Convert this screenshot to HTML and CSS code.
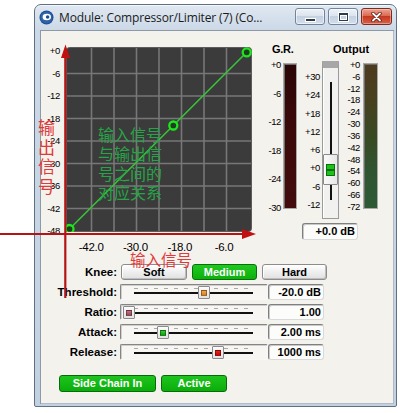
FILE: index.html
```html
<!DOCTYPE html>
<html>
<head>
<meta charset="utf-8">
<link rel="stylesheet" href="styles.css">
</head>
<body>
<div class="window">
  <div class="titlebar">
    <svg class="app-icon" width="15" height="15" viewBox="0 0 15 15">
      <circle cx="7.5" cy="7.5" r="7" fill="#1d4d8e"/>
      <circle cx="7.5" cy="7.5" r="6" fill="#2c63aa"/>
      <ellipse cx="7.8" cy="7" rx="4.2" ry="3.2" fill="#fff"/>
      <circle cx="8.6" cy="7" r="1.8" fill="#1d4d8e"/>
    </svg>
    <span class="title">Module: Compressor/Limiter (7) (Co...</span>
    <div class="caption">
      <div class="cbtn min"><span class="g-min"></span></div>
      <div class="cbtn max"><span class="g-max"></span></div>
      <div class="cbtn close">
        <svg width="11" height="10" viewBox="0 0 11 10">
          <path d="M2 1.5 L9 8.5 M9 1.5 L2 8.5" stroke="#5a1a10" stroke-width="3.4" stroke-linecap="round"/>
          <path d="M2 1.5 L9 8.5 M9 1.5 L2 8.5" stroke="#fff" stroke-width="1.8" stroke-linecap="round"/>
        </svg>
      </div>
    </div>
  </div>
  <div class="client">
    <div class="top">
      <div class="curve">
        <div class="ylabels">
          <span>+0</span><span>-6</span><span>-12</span><span>-18</span><span>-24</span><span>-30</span><span>-36</span><span>-42</span><span>-48</span>
        </div>
        <div class="graph-col">
          <svg class="graph" width="186" height="185" viewBox="0 0 186 185">
            <rect x="0.5" y="0.5" width="185" height="184" rx="3" fill="#3b3b3b" stroke="#5c5c5c"/>
            <g stroke="#777" stroke-width="1.6">
              <line x1="25.5" y1="1" x2="25.5" y2="184"/>
              <line x1="48" y1="1" x2="48" y2="184"/>
              <line x1="70.5" y1="1" x2="70.5" y2="184"/>
              <line x1="93" y1="1" x2="93" y2="184"/>
              <line x1="115.5" y1="1" x2="115.5" y2="184"/>
              <line x1="138" y1="1" x2="138" y2="184"/>
              <line x1="160.5" y1="1" x2="160.5" y2="184"/>
              <line x1="1" y1="26.5" x2="185" y2="26.5"/>
              <line x1="1" y1="49" x2="185" y2="49"/>
              <line x1="1" y1="71.5" x2="185" y2="71.5"/>
              <line x1="1" y1="94" x2="185" y2="94"/>
              <line x1="1" y1="116.5" x2="185" y2="116.5"/>
              <line x1="1" y1="139" x2="185" y2="139"/>
              <line x1="1" y1="161.5" x2="185" y2="161.5"/>
            </g>
            <line x1="3.5" y1="182" x2="180.7" y2="5.3" stroke="#38c438" stroke-width="1.6"/>
            <g stroke="#1ee61e" stroke-width="2.3" fill="#1f3d1f">
              <circle cx="3.5" cy="182" r="4"/>
              <circle cx="107.3" cy="78.5" r="4"/>
              <circle cx="180.7" cy="5.3" r="4"/>
            </g>
          </svg>
          <div class="xlabels">
            <span>-42.0</span><span>-30.0</span><span>-18.0</span><span>-6.0</span>
          </div>
        </div>
      </div>
      <div class="meters">
        <div class="heads"><span class="h-gr">G.R.</span><span class="h-out">Output</span></div>
        <div class="meter-body">
          <div class="scale gr-scale">
            <span>+0</span><span>-6</span><span>-12</span><span>-18</span><span>-24</span><span>-30</span>
          </div>
          <div class="bar gr-bar"></div>
          <div class="scale fader-scale">
            <span>+30</span><span>+24</span><span>+18</span><span>+12</span><span>+6</span><span>+0</span><span>-6</span><span>-12</span>
          </div>
          <div class="fader">
            <div class="fader-line upper"></div>
            <div class="fader-thumb"><span></span><span></span></div>
            <div class="fader-line lower"></div>
          </div>
          <div class="scale out-scale">
            <span>+0</span><span>-6</span><span>-12</span><span>-18</span><span>-24</span><span>-30</span><span>-36</span><span>-42</span><span>-48</span><span>-54</span><span>-60</span><span>-66</span><span>-72</span>
          </div>
          <div class="bar out-bar"></div>
        </div>
        <div class="value gain-box">+0.0 dB</div>
      </div>
    </div>
    <div class="controls">
      <div class="row">
        <span class="label">Knee:</span>
        <div class="knee">
          <div class="btn">Soft</div>
          <div class="btn on">Medium</div>
          <div class="btn">Hard</div>
        </div>
      </div>
      <div class="row">
        <span class="label">Threshold:</span>
        <div class="slider"><div class="ticks"></div><div class="line"></div><div class="thumb c-orange" style="left:77px"><i></i></div></div>
        <div class="value">-20.0 dB</div>
      </div>
      <div class="row">
        <span class="label">Ratio:</span>
        <div class="slider"><div class="ticks"></div><div class="line"></div><div class="thumb c-rose" style="left:2px"><i></i></div></div>
        <div class="value">1.00</div>
      </div>
      <div class="row">
        <span class="label">Attack:</span>
        <div class="slider"><div class="ticks"></div><div class="line"></div><div class="thumb c-green" style="left:36px"><i></i></div></div>
        <div class="value">2.00 ms</div>
      </div>
      <div class="row">
        <span class="label">Release:</span>
        <div class="slider"><div class="ticks"></div><div class="line"></div><div class="thumb c-red" style="left:91px"><i></i></div></div>
        <div class="value">1000 ms</div>
      </div>
    </div>
    <div class="bottom">
      <div class="gbtn side">Side Chain In</div>
      <div class="gbtn active">Active</div>
    </div>
  </div>
</div>

<svg class="axes" width="400" height="413" viewBox="0 0 400 413">
  <line x1="65.3" y1="54" x2="65.3" y2="298" stroke="#b51414" stroke-width="2.2"/>
  <polygon points="61,58 65.5,44.5 70,58" fill="#c01010"/>
  <line x1="0" y1="234" x2="246" y2="234" stroke="#b51414" stroke-width="2.2"/>
  <polygon points="242,229 256,234 242,239" fill="#c01010"/>
</svg>
<div class="note note-out">输出信号</div>
<div class="note note-rel">输入信号<br>与输出信<br>号之间的<br>对应关系</div>
<div class="note note-in">输入信号</div>
</body>
</html>
```

FILE: styles.css
```css
html, body {
  margin: 0;
  background: #fff;
}
body {
  position: relative;
  width: 400px;
  height: 413px;
  box-sizing: border-box;
  padding: 4px 0 0 34px;
  overflow: hidden;
  font-family: "Liberation Sans", Arial, sans-serif;
  color: #000;
}

.window {
  width: 363px;
  height: 403px;
  box-sizing: border-box;
  border: 1px solid #5f7083;
  border-radius: 7px 7px 2px 2px;
  background: linear-gradient(#e0e8f1, #cbd8e7 26px, #c2d1e2);
  padding: 0 2px 2px 5px;
  display: flex;
  flex-direction: column;
  box-shadow: inset 0 1px 0 #f4f8fc;
}

/* title bar */
.titlebar {
  height: 25px;
  display: flex;
  align-items: center;
}
.app-icon {
  margin-left: -1px;
  flex: none;
}
.title {
  margin-left: 5px;
  flex: 1;
  font-family: "Open Sans", "Noto Sans", sans-serif;
  font-size: 12px;
  letter-spacing: -0.15px;
  color: #1b1b1b;
  white-space: nowrap;
  overflow: hidden;
}
.caption {
  align-self: flex-start;
  margin-top: 3px;
  margin-right: 2px;
  display: flex;
}
.cbtn {
  height: 17px;
  box-sizing: border-box;
  border: 1px solid #72849b;
  border-radius: 3px;
  display: flex;
  align-items: center;
  justify-content: center;
  background: linear-gradient(#eef2f7, #dce4ee 45%, #c3d1e1 50%, #d3deea);
  box-shadow: inset 0 0 0 1px rgba(255,255,255,0.55);
}
.cbtn.min { width: 30px; }
.cbtn.max { width: 30px; margin-left: 3px; }
.cbtn.close {
  width: 31px;
  margin-left: 3px;
  border-color: #7d2b1d;
  background: linear-gradient(#eba594, #dc6a52 45%, #c7391f 50%, #d5624a);
  box-shadow: inset 0 0 0 1px rgba(255,220,210,0.45);
}
.g-min {
  width: 9px;
  height: 2px;
  margin-top: 6px;
  background: #2c3a4c;
  box-shadow: 0 0 0 1px #fff;
}
.g-max {
  width: 7px;
  height: 5px;
  border: 1px solid #2c3a4c;
  border-top-width: 2px;
  box-shadow: 0 0 0 1px #fff, inset 0 0 0 1px #fff;
}

/* client */
.client {
  flex: 1;
  background: #f4f2ed;
  box-shadow: inset 1px 1px 0 #8e99a6, inset -1px -1px 0 #b3bcc6;
  display: flex;
  flex-direction: column;
}
.top {
  height: 234px;
  display: flex;
}
.curve {
  width: 222px;
  padding-top: 10px;
  display: flex;
  align-items: flex-start;
}
.ylabels {
  width: 20px;
  display: flex;
  flex-direction: column;
}
.ylabels span {
  height: 22.5px;
  line-height: 22.5px;
  text-align: right;
  font-size: 9.5px;
  letter-spacing: -0.3px;
}
.graph-col {
  margin-left: 6px;
  margin-top: 7px;
}
.graph {
  display: block;
}
.xlabels {
  display: flex;
  padding-left: 3px;
  margin-top: 9px;
}
.xlabels span {
  width: 44.3px;
  text-align: center;
  font-size: 11.5px;
  line-height: 13px;
  letter-spacing: -0.3px;
}

/* meters */
.meters {
  width: 132px;
  display: flex;
  flex-direction: column;
}
.heads {
  margin-top: 13px;
  padding-left: 10px;
  height: 12px;
  line-height: 12px;
  font-size: 11px;
  font-weight: bold;
  display: flex;
}
.h-gr { width: 61px; letter-spacing: -0.3px; }
.meter-body {
  margin-top: 5px;
  display: flex;
  align-items: flex-start;
}
.scale {
  display: flex;
  flex-direction: column;
  justify-content: space-between;
  text-align: right;
  font-size: 9.5px;
  letter-spacing: -0.4px;
}
.scale span { line-height: 10px; height: 10px; }
.gr-scale { width: 19px; height: 152.5px; }
.fader-scale { width: 23px; height: 138px; margin-top: 12px; }
.out-scale { width: 21px; height: 152px; }
.bar {
  box-sizing: border-box;
  height: 146px;
  margin-top: 3px;
  border: 1px solid #a8a8a8;
  box-shadow: inset 1px 1px 0 #6e6e6e;
}
.gr-bar {
  width: 14px;
  margin-left: 2px;
  background: linear-gradient(#2b0606, #3a0909 40%, #440c0c);
}
.out-bar {
  width: 15px;
  margin-left: 3px;
  background: linear-gradient(#4d3b1d, #47401e 25%, #394a22 50%, #2e5530 75%, #2c5a34);
}
.fader {
  width: 17px;
  height: 158px;
  margin-left: 2px;
  margin-top: 1px;
  box-sizing: border-box;
  border: 1px solid #9a9a9a;
  border-top: 7px solid #a7a7a7;
  background: #f1f1f0;
  box-shadow: inset 1px 0 0 #fff;
  display: flex;
  flex-direction: column;
  align-items: center;
}
.fader-line {
  width: 2px;
  background: #111;
}
.fader-line.upper { height: 72px; margin-top: 14px; }
.fader-line.lower { height: 15px; }
.fader-thumb {
  width: 15px;
  height: 31px;
  box-sizing: border-box;
  border: 1px solid #8a8a8a;
  border-radius: 1px;
  background: linear-gradient(90deg, #fafafa, #e6e6e6);
  display: flex;
  flex-direction: column;
  align-items: center;
  padding-top: 10px;
  gap: 2px;
}
.fader-thumb span {
  width: 7px;
  height: 4px;
  background: #19c319;
  box-shadow: 0 0 0 1px #0c6e0c;
}
.value {
  box-sizing: border-box;
  width: 56px;
  height: 16px;
  border: 1px solid;
  border-color: #7f7f7f #d9d9d9 #d9d9d9 #7f7f7f;
  border-radius: 3px;
  background: #fcfcfb;
  box-shadow: inset 1px 1px 0 #c9c9c9;
  font-size: 11px;
  font-weight: bold;
  line-height: 14px;
  text-align: right;
  padding-right: 2px;
}
.gain-box {
  margin-left: 40px;
  margin-top: 4px;
  height: 17px;
  line-height: 15px;
}

/* controls */
.controls {
  display: flex;
  flex-direction: column;
  gap: 4px;
}
.row {
  height: 16px;
  display: flex;
  align-items: center;
}
.label {
  width: 77px;
  margin-right: 3px;
  text-align: right;
  font-size: 11.5px;
  font-weight: bold;
}
.knee {
  margin-left: 1px;
  display: flex;
  gap: 5px;
}
.btn {
  width: 65px;
  height: 16px;
  box-sizing: border-box;
  border: 1px solid #8c8c8c;
  border-radius: 3px;
  background: linear-gradient(#ffffff, #ececec 60%, #e1e1e1);
  box-shadow: inset -1px -1px 0 #bdbdbd, inset 1px 1px 0 #fff;
  text-align: center;
  font-size: 11px;
  font-weight: bold;
  line-height: 14px;
}
.btn:first-child { width: 66px; }
.btn.on {
  background: linear-gradient(#22c822, #0cb10c);
  border-color: #0a6f0a;
  box-shadow: none;
  color: #fff;
}
.slider {
  position: relative;
  width: 148px;
  height: 16px;
  box-sizing: border-box;
  border: 1px solid;
  border-color: #858585 #f8f8f8 #f8f8f8 #858585;
  border-radius: 2px;
  background: #f7f6f3;
  box-shadow: inset 1px 1px 0 #cfcfcf;
  padding: 0 14px 0 13px;
  display: flex;
  flex-direction: column;
  justify-content: center;
}
.ticks {
  height: 1px;
  margin-bottom: 3px;
  margin-top: -3px;
  background: repeating-linear-gradient(90deg, #a9a9a9 0 4px, transparent 4px 10px);
}
.line {
  height: 2px;
  background: #121212;
}
.thumb {
  position: absolute;
  top: 1px;
  width: 12px;
  height: 13px;
  box-sizing: border-box;
  border: 1px solid #8b8b8b;
  border-radius: 1px;
  background: linear-gradient(#fbfbfb, #e2e2e2);
  display: flex;
  align-items: center;
  justify-content: center;
}
.thumb i {
  width: 6px;
  height: 6px;
  box-sizing: border-box;
  border: 1px solid rgba(0,0,0,0.35);
}
.c-orange i { background: linear-gradient(#f2a850, #d8801c); }
.c-rose i { background: linear-gradient(#c07080, #9a4a5a); }
.c-green i { background: linear-gradient(#30d030, #10a010); }
.c-red i { background: linear-gradient(#ee2020, #c00808); }

.bottom {
  margin-top: 15px;
  padding-left: 19px;
  display: flex;
  gap: 5px;
}
.gbtn {
  height: 17px;
  box-sizing: border-box;
  border: 1px solid #0a6a0a;
  border-radius: 3px;
  background: linear-gradient(#1ec41e, #0aae0a);
  color: #fff;
  font-size: 11px;
  font-weight: bold;
  line-height: 15px;
  text-align: center;
}
.gbtn.side { width: 97px; }
.gbtn.active { width: 66px; }

/* annotations over the window */
.axes {
  position: absolute;
  left: 0;
  top: 0;
  pointer-events: none;
}
.note {
  position: absolute;
  font-family: "Noto Sans CJK SC", "Noto Sans CJK JP", sans-serif;
  white-space: nowrap;
}
.note-out {
  left: 38px;
  top: 117px;
  width: 18px;
  white-space: normal;
  font-size: 17px;
  line-height: 19.5px;
  color: #e23a3a;
}
.note-rel {
  left: 98px;
  top: 125px;
  font-size: 16px;
  line-height: 19.3px;
  color: #27a447;
}
.note-in {
  left: 130px;
  top: 251px;
  font-size: 15.5px;
  line-height: 17px;
  color: #e23a3a;
}
```
